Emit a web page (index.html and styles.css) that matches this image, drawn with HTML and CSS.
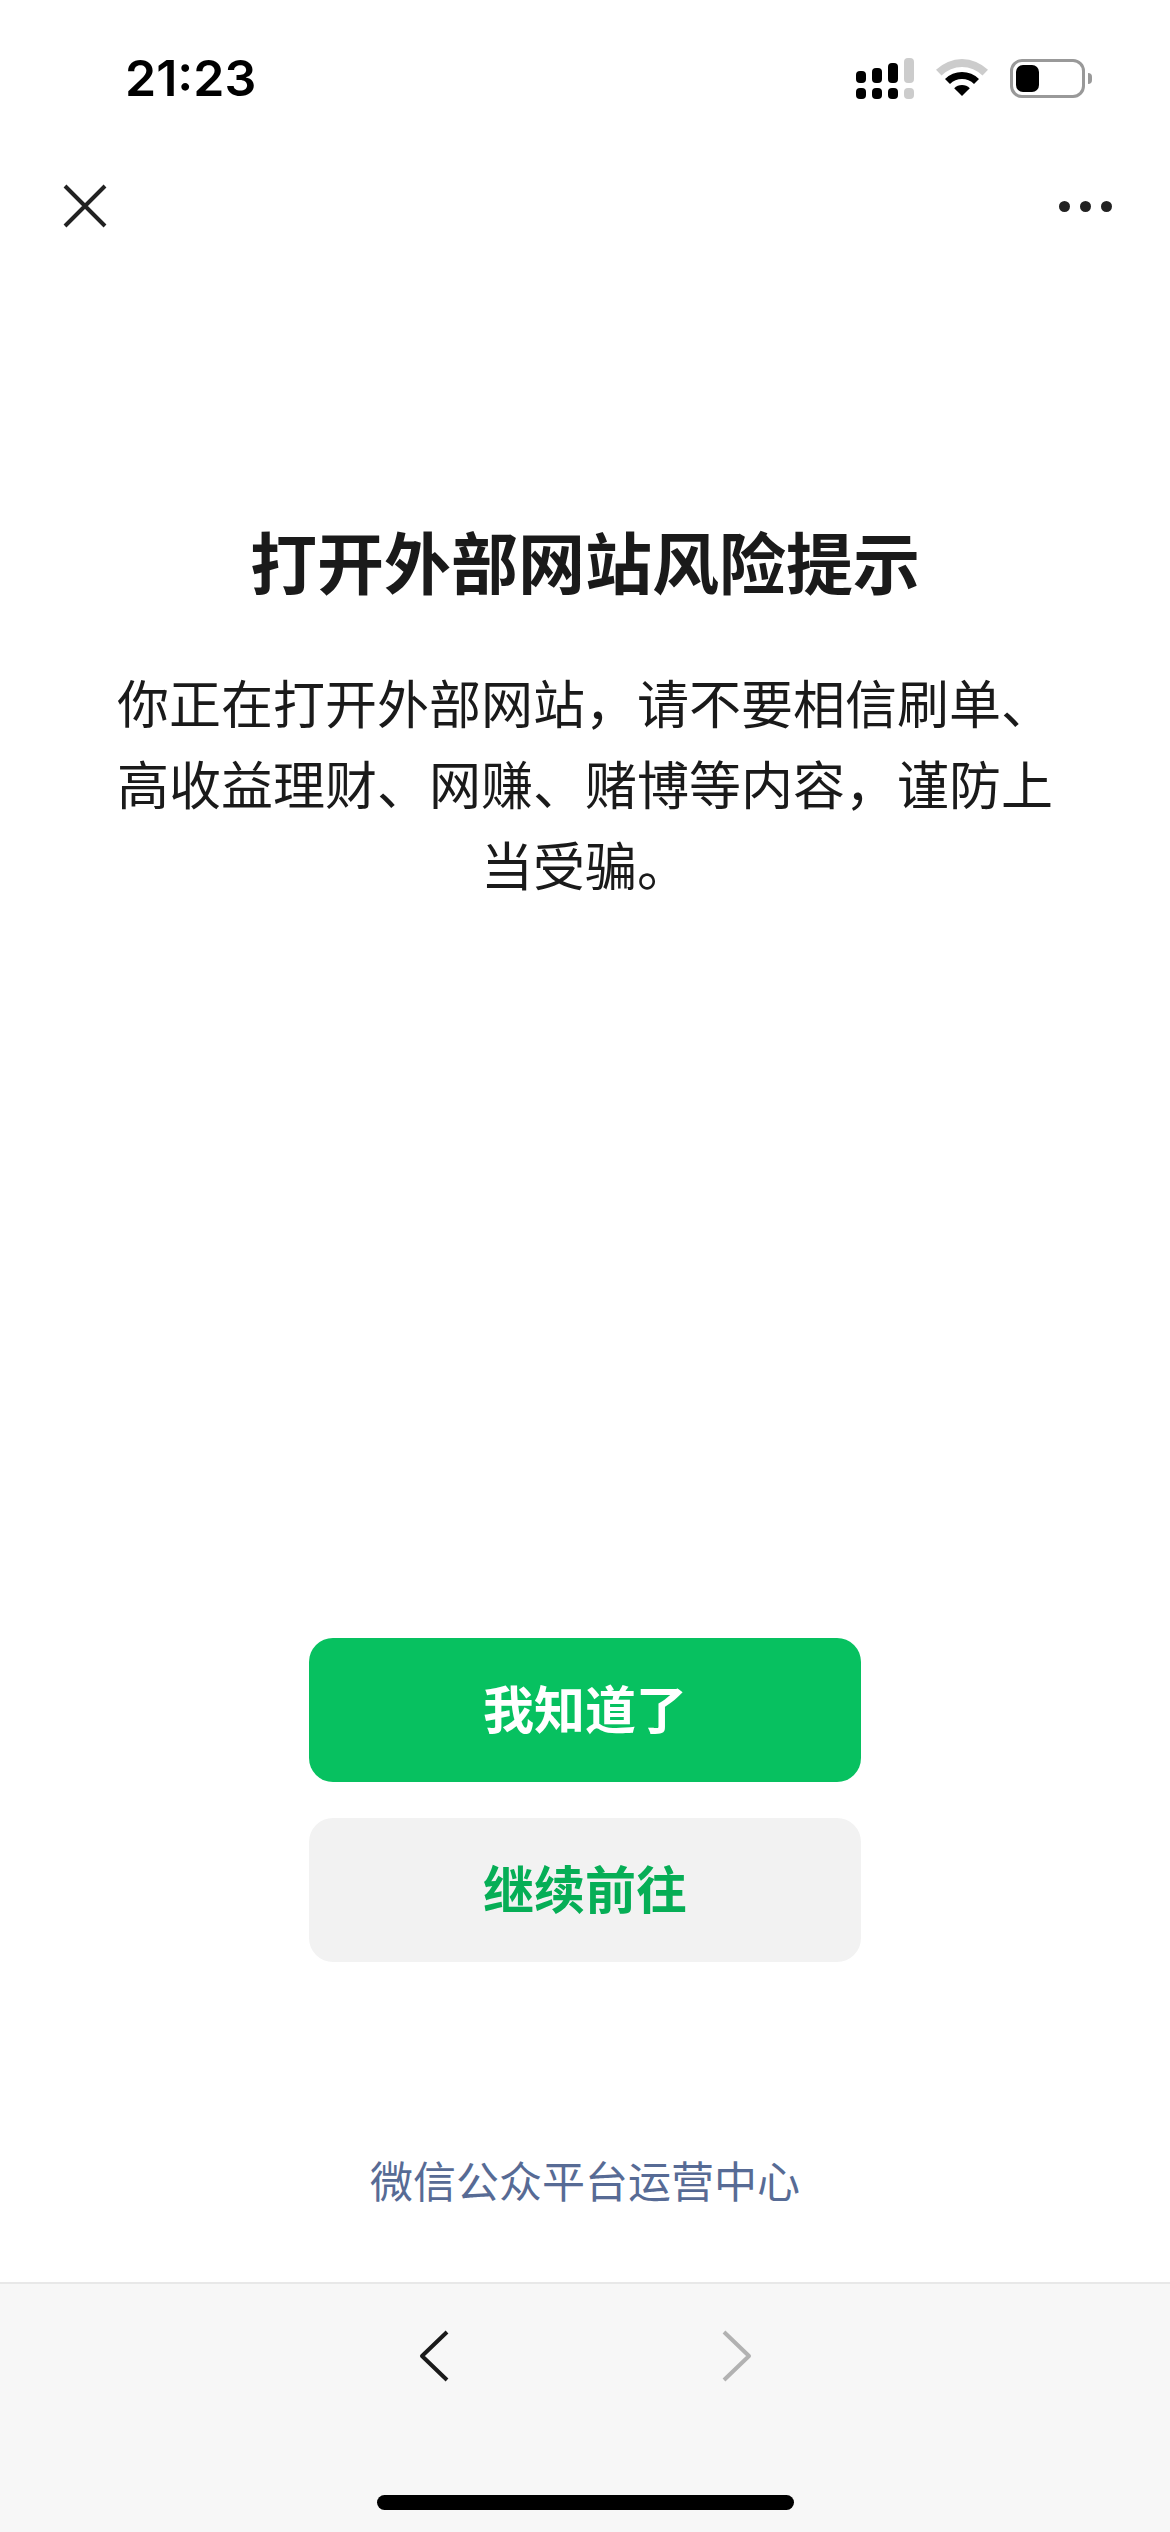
FILE: index.html
```html
<!DOCTYPE html>
<html lang="zh-CN">

<head>
    <meta charset="UTF-8">
    <meta name="viewport" content="width=device-width, initial-scale=1.0">
    <title>打开外部网站风险提示</title>
    <link rel="stylesheet" href="styles.css">
</head>

<body>
    <div class="page-container">
        <div class="status-bar">
            <span class="status-time">21:23</span>
            <div class="status-icons">
                <svg width="58" height="41" viewBox="0 0 58 41">
                    <rect x="0" y="13" width="10" height="12" rx="4"/>
                    <rect x="16" y="10" width="10" height="15" rx="4"/>
                    <rect x="32" y="5" width="10" height="20" rx="4"/>
                    <rect x="48" y="0" width="10" height="25" rx="4" fill="#cccccc"/>
                    <rect x="0" y="30" width="10" height="11" rx="4"/>
                    <rect x="16" y="30" width="10" height="11" rx="4"/>
                    <rect x="32" y="30" width="10" height="11" rx="4"/>
                    <rect x="48" y="30" width="10" height="11" rx="4" fill="#cccccc"/>
                </svg>
                <svg width="52" height="38" viewBox="0 0 52 38">
                    <path d="M0 10.8A37 37 0 0 1 52 10.8L46.5 16.5A29 29 0 0 0 5.5 16.5Z" fill="#cccccc"/>
                    <path d="M9 20A24 24 0 0 1 43 20L38 25A17 17 0 0 0 14 25Z"/>
                    <path d="M18.2 29.2A11 11 0 0 1 33.8 29.2L26 37Z"/>
                </svg>
                <div class="battery">
                    <div class="battery-body">
                        <div class="battery-level"></div>
                    </div>
                    <div class="battery-nub"></div>
                </div>
            </div>
        </div>

        <nav class="top-nav">
            <svg class="nav-icon" width="44" height="44" viewBox="0 0 44 44">
                <path d="M2 2L42 42M42 2L2 42" stroke="#222222" stroke-width="4" fill="none"/>
            </svg>
            <div class="more-dots">
                <div></div>
                <div></div>
                <div></div>
            </div>
        </nav>

        <main class="main-content">
            <h1 class="warn-title">打开外部网站风险提示</h1>
            <p class="warn-text">你正在打开外部网站，请不要相信刷单、高收益理财、网赚、赌博等内容，谨防上当受骗。</p>

            <div class="button-group">
                <a class="btn btn-primary" href="#">我知道了</a>
                <a class="btn btn-default" href="#">继续前往</a>
            </div>

            <a class="footer-link" href="#">微信公众平台运营中心</a>
        </main>

        <footer class="toolbar">
            <div class="toolbar-arrows">
                <svg width="30" height="52" viewBox="0 0 30 52">
                    <path d="M28 2L3 26L28 50" stroke="#1a1a1a" stroke-width="4" stroke-linejoin="round" fill="none"/>
                </svg>
                <svg width="30" height="52" viewBox="0 0 30 52">
                    <path d="M2 2L27 26L2 50" stroke="#b2b2b2" stroke-width="4" stroke-linejoin="round" fill="none"/>
                </svg>
            </div>
            <div class="home-indicator"></div>
        </footer>
    </div>
</body>

</html>
```

FILE: styles.css
```css
* {
    margin: 0;
    padding: 0;
    box-sizing: border-box;
}

body {
    font-family: "Noto Sans CJK SC", "Noto Sans", sans-serif;
    background-color: #ffffff;
    color: #1a1a1a;
}

.page-container {
    display: flex;
    flex-direction: column;
    height: 2532px;
}

.status-bar {
    display: flex;
    justify-content: space-between;
    align-items: center;
    height: 156px;
    padding: 0 78px 0 125px;
}

.status-time {
    font-family: Inter, sans-serif;
    font-size: 50px;
    font-weight: 600;
    color: #000000;
}

.status-icons {
    display: flex;
    align-items: center;
    gap: 22px;
}

.battery {
    display: flex;
    align-items: center;
    gap: 3px;
}

.battery-body {
    width: 75px;
    height: 39px;
    padding: 3px;
    border: 3px solid #999999;
    border-radius: 12px;
}

.battery-level {
    width: 23px;
    height: 27px;
    background-color: #000000;
    border-radius: 7px;
}

.battery-nub {
    width: 4px;
    height: 11px;
    background-color: #999999;
    border-radius: 0 5px 5px 0;
}

.top-nav {
    display: flex;
    justify-content: space-between;
    align-items: center;
    height: 100px;
    padding: 0 58px 0 63px;
}

.more-dots {
    display: flex;
    gap: 10px;
}

.more-dots div {
    width: 11px;
    height: 11px;
    background-color: #222222;
    border-radius: 50%;
}

.main-content {
    flex: 1;
    display: flex;
    flex-direction: column;
    align-items: center;
    padding: 259px 110px 0;
}

.warn-title {
    font-size: 67px;
    font-weight: 600;
    line-height: 90px;
    text-align: center;
    margin-bottom: 56px;
}

.warn-text {
    font-size: 52px;
    line-height: 81px;
    text-align: center;
}

.button-group {
    display: flex;
    flex-direction: column;
    gap: 36px;
    width: 552px;
    margin-top: auto;
}

.btn {
    display: flex;
    justify-content: center;
    align-items: center;
    height: 144px;
    padding-bottom: 6px;
    border-radius: 24px;
    font-size: 51px;
    font-weight: 600;
    text-decoration: none;
}

.btn-primary {
    background-color: #07c160;
    color: #ffffff;
}

.btn-default {
    background-color: #f2f2f2;
    color: #06ae56;
}

.footer-link {
    margin: 187px 0 73px;
    font-size: 43px;
    line-height: 60px;
    color: #576b95;
    text-decoration: none;
}

.toolbar {
    display: flex;
    flex-direction: column;
    align-items: center;
    height: 250px;
    background-color: #f7f7f7;
    border-top: 2px solid #e8e8e8;
}

.toolbar-arrows {
    display: flex;
    gap: 273px;
    margin-top: 46px;
}

.home-indicator {
    width: 417px;
    height: 15px;
    margin-top: 113px;
    background-color: #000000;
    border-radius: 8px;
}
```
